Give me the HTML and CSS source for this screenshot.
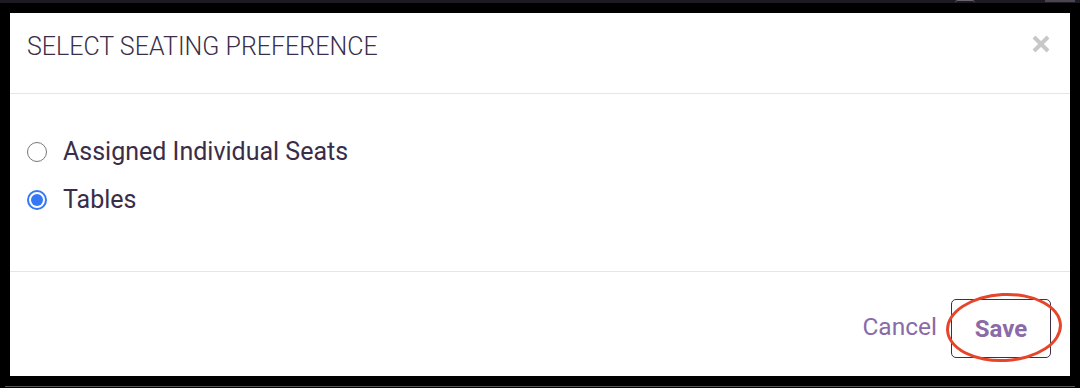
FILE: index.html
```html
<!DOCTYPE html>
<html lang="en">
<head>
<meta charset="utf-8">
<title>Select seating preference</title>
<link rel="stylesheet" href="styles.css">
</head>
<body>
<div class="topstrip">
  <span class="bit bit-arc"></span>
  <span class="bit bit-right"></span>
</div>
<div class="modal" role="dialog" aria-labelledby="modal-title">
  <header class="modal-header">
    <h2 id="modal-title" class="modal-title">SELECT SEATING PREFERENCE</h2>
    <button class="close" aria-label="Close">
      <svg width="18" height="18" viewBox="0 0 18 18"><path d="M2 2 L16 16 M16 2 L2 16" stroke="#c8c8c8" stroke-width="4" stroke-linecap="butt"/></svg>
    </button>
  </header>
  <div class="modal-body">
    <label class="option">
      <span class="radio"></span>
      <span class="option-label">Assigned Individual Seats</span>
    </label>
    <label class="option">
      <span class="radio checked"></span>
      <span class="option-label">Tables</span>
    </label>
  </div>
  <footer class="modal-footer">
    <button class="btn-link">Cancel</button>
    <button class="btn-save">Save<span class="annotation"></span></button>
  </footer>
</div>
<div class="bottomline"></div>
</body>
</html>
```

FILE: styles.css
```css
html, body {
  margin: 0;
  padding: 0;
  background: #000;
  width: 1080px;
  height: 388px;
  overflow: hidden;
  font-family: Roboto, "Liberation Sans", sans-serif;
}

.topstrip {
  height: 3px;
  background: #1e1a24;
  margin-bottom: 10px;
  display: flex;
  align-items: flex-start;
}
.bit-arc {
  margin-left: 955px;
  width: 20px;
  height: 3px;
  border-top: 1px solid #6a6470;
  border-radius: 10px 10px 0 0;
  box-sizing: border-box;
}
.bit-right {
  margin-left: 70px;
  width: 30px;
  height: 2px;
  background: #4a4550;
}

.modal {
  margin-left: 10px;
  width: 1060px;
  height: 363px;
  background: #fff;
  display: flex;
  flex-direction: column;
}

.modal-header {
  height: 80px;
  border-bottom: 1px solid #e6e6e6;
  display: flex;
  justify-content: space-between;
  align-items: flex-start;
  padding: 0 20px 0 17px;
}
.modal-title {
  margin: 0;
  padding-top: 19px;
  font-size: 25px;
  line-height: 30px;
  font-weight: 300;
  color: #3b2f48;
  letter-spacing: 0;
}
.close {
  margin-top: 22px;
  padding: 0;
  border: 0;
  background: none;
  width: 18px;
  height: 18px;
  display: flex;
}

.modal-body {
  height: 178px;
  border-bottom: 1px solid #e6e6e6;
  padding: 43px 0 0 17px;
  box-sizing: border-box;
  display: flex;
  flex-direction: column;
  gap: 18px;
}
.option {
  display: flex;
  align-items: center;
  height: 30px;
  gap: 16px;
}
.radio {
  width: 20px;
  height: 20px;
  box-sizing: border-box;
  border-radius: 50%;
  border: 1.5px solid #777;
  background: #fff;
  display: flex;
  align-items: center;
  justify-content: center;
}
.radio.checked {
  border: 2px solid #3478f6;
}
.radio.checked::after {
  content: "";
  width: 12px;
  height: 12px;
  border-radius: 50%;
  background: #3478f6;
}
.option-label {
  font-size: 25px;
  line-height: 30px;
  color: #3a2d47;
}

.modal-footer {
  flex: 1;
  display: flex;
  justify-content: flex-end;
  align-items: flex-start;
  padding: 27px 19px 0 0;
  gap: 14px;
}
.btn-link {
  border: 0;
  background: none;
  padding: 0;
  margin-top: 13px;
  font-family: inherit;
  font-size: 24.5px;
  line-height: 30px;
  color: #8b6aa8;
}
.btn-save {
  position: relative;
  width: 100px;
  height: 59px;
  box-sizing: border-box;
  border: 1px solid #3d3048;
  border-radius: 5px;
  background: #fff;
  font-family: inherit;
  font-size: 24px;
  font-weight: 700;
  color: #8b6aa8;
  padding: 0;
}
.annotation {
  position: absolute;
  left: -6px;
  top: -7px;
  width: 116px;
  height: 69px;
  box-sizing: border-box;
  border: 3.5px solid #e6452b;
  border-radius: 50%;
  transform: rotate(-3deg);
}

.bottomline {
  margin: 10px 5px 0 5px;
  height: 1px;
  background: #5a5a5a;
}
```
